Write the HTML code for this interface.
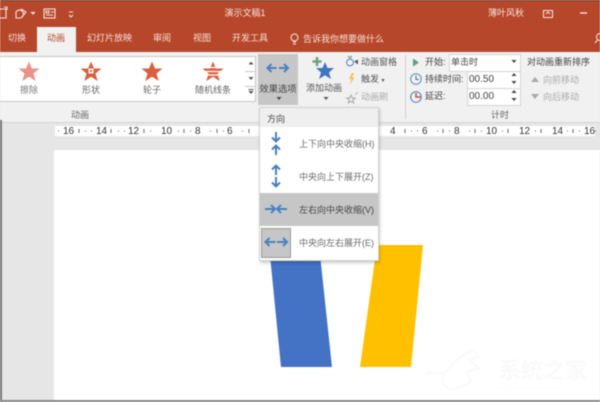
<!DOCTYPE html>
<html><head><meta charset="utf-8"><style>
html,body{margin:0;padding:0;background:#e6e6e6}
#p{position:relative;width:600px;height:402px;overflow:hidden;background:#e6e6e6;font-family:"Liberation Sans","Noto Sans CJK SC",sans-serif;font-size:9px;color:#444;filter:blur(.4px)}
#p div,#p span{position:absolute;white-space:nowrap}
.t{color:#f6dfd8;font-size:9px;line-height:14px}
.c{text-align:center;transform:translateX(-50%)}
.g{color:#a9a9a9}
svg{position:absolute;overflow:visible}
.m{font-size:9px;color:#6a6a6a;left:299px;line-height:12px}
</style></head><body><div id="p">
<div style="left:0;top:0;width:600px;height:52px;background:#b7472a"></div>
<div style="left:0;top:0;width:600px;height:1px;background:#6e3a2a"></div>
<svg style="left:0;top:0" width="110" height="27" fill="none" stroke="#f5e3dd" stroke-width="1.1">
<path d="M0 9h6v9H0M4 7h3v3"/><path d="M16 12a4 4 0 1 1 4 6h-4zM21 9l5 3-4 5"/><path d="M31 12l2 2 2-2" fill="#f5e3dd"/>
<rect x="44" y="9" width="11" height="9"/><path d="M46 11h3v2h-3zM46 15h7M51 12h3"/><path d="M69 12h4M69 15l2 2 2-2" />
</svg>
<div class="t c" style="left:245px;top:6px;color:#f7e6e0">演示文稿1</div>
<div class="t c" style="left:506px;top:6px;color:#f7e6e0">薄叶风秋</div>
<svg style="left:540px;top:6px" width="60" height="16" fill="none" stroke="#f5e3dd"><rect x="3.5" y="4.5" width="9" height="7"/><path d="M6 8l2-2 2 2" /><path d="M40 7h7" stroke-width="1.4"/></svg>
<div class="t" style="left:8px;top:31px">切换</div>
<div style="left:37px;top:27px;width:39px;height:25px;background:#f1f1f1"></div>
<div class="t" style="left:47px;top:31px;color:#b7472a">动画</div>
<div class="t" style="left:87px;top:31px">幻灯片放映</div>
<div class="t" style="left:153px;top:31px">审阅</div>
<div class="t" style="left:193px;top:31px">视图</div>
<div class="t" style="left:232px;top:31px">开发工具</div>
<svg style="left:290px;top:32px" width="12" height="14" fill="none" stroke="#f5e3dd"><circle cx="4.500" cy="5.500" r="3.500"/><path d="M3 10h3M3 12h3"/></svg>
<div class="t" style="left:303px;top:32px">告诉我你想要做什么</div>
<svg style="left:594px;top:32px" width="8" height="14" fill="none" stroke="#f5e3dd"><circle cx="6" cy="5" r="3.5"/><path d="M3.5 8L1 11"/></svg>

<div style="left:0;top:52px;width:600px;height:70px;background:#f1f1f1"></div>
<div style="left:-1px;top:56px;width:246px;height:44px;background:#fff;border:1px solid #c6c6c6"></div>
<div style="left:245px;top:56px;width:10px;height:44px;background:#fff;border:1px solid #c6c6c6;border-left:0"></div>
<div style="left:245px;top:71px;width:11px;height:1px;background:#c6c6c6"></div>
<div style="left:245px;top:86px;width:11px;height:1px;background:#c6c6c6"></div>
<svg style="left:246px;top:58px" width="10" height="42" fill="#555"><path d="M2.5 6.5l2.5-3 2.500 3zM2.500 19l2.500 3 2.500-3zM2.500 33l2.500 3 2.500-3zM2.500 31h5v1h-5z"/></svg>
<svg style="left:15px;top:60px" width="220" height="22">
<path d="M14 1.500l3 7h7.500l-6 5 2.200 7.500-6.700-4.300-6.700 4.300 2.200-7.500-6-5h7.500z" fill="#e8948a"/>
<path d="M76 1.500l3 7h7.500l-6 5 2.200 7.500-6.700-4.300-6.700 4.300 2.200-7.500-6-5h7.500z" fill="#d9603f"/><rect x="73.500" y="8.500" width="5" height="5" fill="#fff"/><rect x="75" y="10" width="2" height="2" fill="#d9603f"/>
<path d="M137 1.500l3 7h7.500l-6 5 2.200 7.500-6.700-4.300-6.700 4.300 2.200-7.500-6-5h7.500z" fill="#d9603f"/>
<path d="M198 1.500l3 7h7.500l-6 5 2.200 7.500-6.700-4.300-6.700 4.300 2.200-7.500-6-5h7.500z" fill="#d9603f"/><path d="M188 7.500h20M189 11.500h18M190 15h16" stroke="#fff" stroke-width="1.300"/>
</svg>
<div class="c" style="left:29px;top:83px;color:#777">擦除</div>
<div class="c" style="left:91px;top:83px;color:#666">形状</div>
<div class="c" style="left:152px;top:83px;color:#666">轮子</div>
<div class="c" style="left:213px;top:83px;color:#666">随机线条</div>
<div class="c" style="left:80px;top:108px;color:#666">动画</div>

<div style="left:258px;top:54px;width:40px;height:51px;background:#c6c6c6"></div>
<svg style="left:266px;top:62px" width="24" height="12" fill="none" stroke="#4a80bd" stroke-width="2"><path d="M1.500 6h9M5.500 2L1.500 6l4 4M22 6h-9M18 2l4 4-4 4" /></svg>
<div class="c" style="left:278px;top:81px;color:#444;font-size:9.300px">效果选项</div>
<svg style="left:276px;top:97px" width="6" height="4" fill="#444"><path d="M.5 0h5L3 3z"/></svg>

<svg style="left:310px;top:55px" width="30" height="26"><path d="M22 8l2.500 6h6.500l-5 4.500 2 6.500-6-3.800-6 3.800 2-6.500-5-4.500h6.500z" transform="translate(-7 -1)" fill="#3f76bf"/><path d="M7 2v9M2.500 6.500h9" stroke="#6fa287" stroke-width="2.600"/></svg>
<div class="c" style="left:324px;top:81px;color:#555">添加动画</div>
<svg style="left:323px;top:97px" width="6" height="4" fill="#555"><path d="M.5 0h5L3 3z"/></svg>

<svg style="left:345px;top:55px" width="14" height="50" fill="none">
<circle cx="5" cy="7.500" r="3.400" stroke="#4a80bd"/><path d="M3 1l2 2 2-2" stroke="#5a9a7a"/><path d="M9 6.500l4-2v5z" fill="#555"/>
<path d="M7 18l-3 6h2.500l-2 6 5-7.500H7l2-4.500z" fill="#f2c34a"/>
<path d="M6 40l1.300 3h3l-2.500 2 1 3-2.800-1.800-2.800 1.800 1-3-2.500-2h3z" stroke="#a9a9a9" fill="#eee"/><path d="M10 40l3-3" stroke="#b9b9b9"/>
</svg>
<div style="left:361px;top:55px;color:#555">动画窗格</div>
<div style="left:361px;top:72px;color:#555">触发 <span style="position:static;font-size:6px">▾</span></div>
<div class="g" style="left:361px;top:90px">动画刷</div>

<div style="left:405px;top:55px;width:1px;height:64px;background:#d2d2d2"></div>
<svg style="left:412px;top:56px" width="10" height="14"><path d="M1 2.500l6 4-6 4z" fill="#5f9c88"/></svg>
<svg style="left:410px;top:73px" width="14" height="34" fill="none" stroke="#5b8cc0"><circle cx="6" cy="6" r="5.300"/><path d="M6 2.500v4h3" stroke="#666"/><circle cx="6" cy="24" r="5.300" stroke-width="1.200"/><path d="M6 20v4h4.500" stroke="#c9502f" stroke-width="1.500"/></svg>
<div style="left:425px;top:55px">开始:</div>
<div style="left:425px;top:72px">持续时间:</div>
<div style="left:425px;top:89px">延迟:</div>
<div style="left:449px;top:54px;width:70px;height:16px;background:#fff;border:1px solid #d4d4d4"></div>
<div style="left:451px;top:55px">单击时</div>
<svg style="left:511px;top:60px" width="6" height="4" fill="#444"><path d="M.5 0h5L3 3z"/></svg>
<div style="left:467px;top:71px;width:52px;height:16px;background:#fff;border:1px solid #d4d4d4"></div>
<div style="left:467px;top:88px;width:52px;height:16px;background:#fff;border:1px solid #d4d4d4"></div>
<div style="left:469px;top:74px;font-size:10px">00.50</div>
<div style="left:469px;top:91px;font-size:10px">00.00</div>
<svg style="left:511px;top:73px" width="6" height="32" fill="#444"><path d="M.5 3h5L3 0zM.5 8h5L3 11zM.5 20h5L3 17zM.5 25h5L3 28z"/></svg>
<div class="c" style="left:500px;top:108px;color:#666">计时</div>
<div style="left:527px;top:55px">对动画重新排序</div>
<svg style="left:531px;top:76px" width="9" height="24" fill="#a9a9a9"><path d="M0 6h8L4 1zM0 18h8l-4 5z"/></svg>
<div class="g" style="left:543px;top:73px">向前移动</div>
<div class="g" style="left:543px;top:90px">向后移动</div>
<div style="left:0;top:122px;width:600px;height:1px;background:#d4d4d4"></div>

<div style="left:55px;top:126px;width:540px;height:10px;background:#fff"></div>
<div style="left:55px;top:125px;width:545px;height:13px;font-size:10px;line-height:13px;color:#333">
<span style="left:8px">16</span><span style="left:41px">14</span><span style="left:73px">12</span><span style="left:106px">10</span><span style="left:140px">8</span><span style="left:172px">6</span>
<span style="left:335px">4</span><span style="left:367px">6</span><span style="left:399px">8</span><span style="left:431px">10</span><span style="left:464px">12</span><span style="left:497px">14</span><span style="left:529px">16</span></div>
<svg style="left:55px;top:128px" width="545" height="6" stroke="#666"><path d="M3 3h1M24 1v4M30 3h1M36 3h1M56 1v4M63 3h1M69 3h1M89 1v4M95 3h1M123 3h1M129 1v4M135 3h1M155 3h1M162 1v4M168 3h1M187 3h1M194 1v4M350 1v4M356 3h1M362 3h1M382 3h1M388 1v4M394 3h1M414 3h1M420 1v4M426 3h1M447 3h1M453 1v4M480 3h1M486 1v4M512 3h1M518 1v4M524 3h1M540 3h1"/></svg>

<div style="left:0;top:120px;width:2px;height:282px;background:#777"></div>
<div style="left:54px;top:150px;width:546px;height:250px;background:#fff"></div>
<div style="left:0;top:400px;width:600px;height:2px;background:#888"></div>
<svg style="left:0;top:0" width="600" height="402"><polygon points="269,245 319,245 332,367 281,367" fill="#4472c4"/><polygon points="377,245 423,245 411,367 360,367" fill="#ffc000"/>
<path d="M426 373h18l15-15 14-9 6 8-10 3 10 8-12 4 4 10-20 8-8-6v-10l-8-1z" fill="none" stroke="#fafafa" stroke-width="2"/></svg>
<div style="left:499px;top:358px;font-size:22px;line-height:26px;color:#fafafa;font-weight:bold">系统之家</div>
<div style="left:497px;top:386px;font-size:6px;letter-spacing:1px;color:#fafafa">XITONGZHIJIA.NET</div>

<div style="left:259px;top:107px;width:120px;height:154px;background:#fff;border:1px solid #d0d0d0;box-sizing:border-box;box-shadow:1px 2px 3px rgba(0,0,0,.2)"></div>
<div style="left:260px;top:108px;width:118px;height:19px;background:#efefef"></div>
<div style="left:267px;top:112px">方向</div>
<div style="left:260px;top:193px;width:118px;height:33px;background:#c6c6c6"></div>
<div style="left:261px;top:228px;width:28px;height:28px;background:#c6c6c6;border:1px solid #999"></div>
<svg style="left:260px;top:127px" width="40" height="132" fill="none" stroke="#4a80bd" stroke-width="2">
<path d="M16 5v9.500M12 10.500l4 4 4-4M16 28v-9.500M12 22.500l4-4 4 4"/>
<path d="M16 48v-9.500M12 42.500l4-4 4 4M16 50v9.500M12 55.500l4 4 4-4"/>
<path d="M5 82h10M11 78l4 4-4 4M27 82h-10M21 78l-4 4 4 4"/>
<path d="M5.500 115h10M9.500 111l-4 4 4 4M27 115h-10M23 111l4 4-4 4"/>
</svg>
<div class="m" style="top:138px">上下向中央收缩(H)</div>
<div class="m" style="top:171px">中央向上下展开(Z)</div>
<div class="m" style="top:204px;color:#444">左右向中央收缩(V)</div>
<div class="m" style="top:237px">中央向左右展开(E)</div>
</div></body></html>
